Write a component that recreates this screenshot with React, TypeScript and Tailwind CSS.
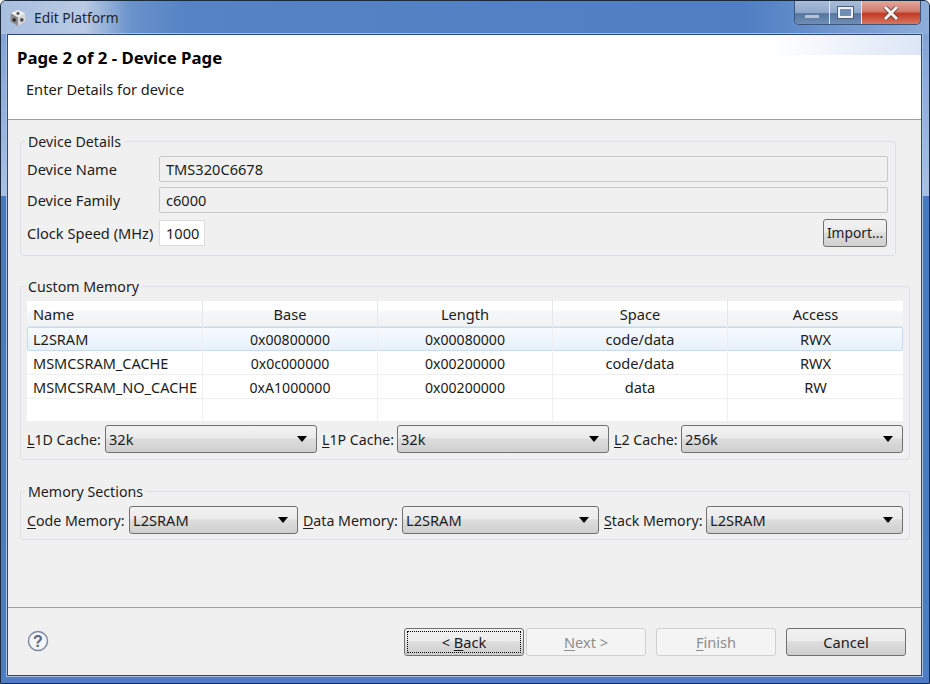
import type { ReactNode } from 'react'

const rows = [
  ['L2SRAM', '0x00800000', '0x00080000', 'code/data', 'RWX'],
  ['MSMCSRAM_CACHE', '0x0c000000', '0x00200000', 'code/data', 'RWX'],
  ['MSMCSRAM_NO_CACHE', '0xA1000000', '0x00200000', 'data', 'RW'],
]

function Group({ title, className, children }: { title: string; className: string; children: ReactNode }) {
  return (
    <fieldset className={`rounded-[3px] border border-[#dcdfe3] ${className}`}>
      <legend className="-ml-[2px] h-[20px] px-[3px] text-[14.2px] leading-[22px]">{title}</legend>
      {children}
    </fieldset>
  )
}

function Select({ value, className }: { value: string; className: string }) {
  return (
    <div className={`flex h-[28px] items-center justify-between rounded-[3px] border border-[#707070] bg-[linear-gradient(#f2f2f2_0%,#ebebeb_45%,#dddddd_50%,#cfcfcf_100%)] pl-[3px] pr-[9px] ${className}`}>
      <span>{value}</span>
      <span className="h-0 w-0 border-x-[5px] border-t-[6px] border-x-transparent border-t-black" />
    </div>
  )
}

function Label({ mark, rest, className = '' }: { mark: string; rest: string; className?: string }) {
  return (
    <span className={`whitespace-nowrap pt-[2px] text-[14.2px] ${className}`}>
      <u className="underline-offset-2">{mark}</u>
      {rest}
    </span>
  )
}

function Button({ children, disabled, focused }: { children: ReactNode; disabled?: boolean; focused?: boolean }) {
  if (disabled) {
    return (
      <div className="flex h-[28px] w-[120px] items-center justify-center rounded-[3px] border border-[#d0d0d0] bg-[#f4f4f4] text-[#8d8d8d]">
        {children}
      </div>
    )
  }
  return (
    <div className="flex h-[28px] w-[120px] items-center justify-center rounded-[3px] border border-[#707070] bg-[linear-gradient(#f2f2f2_0%,#ebebeb_45%,#dddddd_50%,#cfcfcf_100%)] p-[2px]">
      <div className={`flex h-full w-full items-center justify-center ${focused ? 'border border-dotted border-black' : ''}`}>
        {children}
      </div>
    </div>
  )
}

function CubeIcon() {
  return (
    <svg width="18" height="18" viewBox="1 0.5 18 19" className="shrink-0">
      <path d="M10 1.5 17.5 5 18 13.5 10 18.5 2 13.5 2.5 5Z" fill="#b5b5b5" strokeLinejoin="round" />
      <path d="M10 1.5 17.5 5 10 9.5 2.5 5Z" fill="#f0f0f0" />
      <path d="M2.5 5 10 9.5 10 18.5 2 13.5Z" fill="#8a8a8a" />
      <path d="M10 9.5 17.5 5 18 13.5 10 18.5Z" fill="#d8d8d8" />
      <circle cx="10" cy="5.2" r="1.7" fill="#5c5c5c" />
      <circle cx="6" cy="12" r="1.9" fill="#2e2e2e" />
      <circle cx="14" cy="12" r="1.9" fill="#4a4a4a" />
    </svg>
  )
}

function HelpIcon() {
  return (
    <svg width="22" height="22" viewBox="0 0 22 22">
      <circle cx="11" cy="11" r="9.5" fill="#f4f5f8" stroke="#7f8ba3" strokeWidth="1.5" />
      <text x="11" y="16.5" textAnchor="middle" fontSize="16" fontWeight="700" fill="#5a6580" fontFamily="Liberation Sans, sans-serif">?</text>
    </svg>
  )
}

export default function App() {
  return (
    <div className="flex h-[684px] w-[930px] flex-col overflow-hidden rounded-t-[6px] border border-[#1b2a3c] bg-[linear-gradient(#7a9ed3_0px,#a9c0e2_195px,#4a78c0_195px,#4f7dc3_684px)] font-['Noto_Sans',sans-serif] text-[14.6px] leading-[20px] text-[#1c1c1c]">
      {/* title bar */}
      <div className="flex h-[33px] shrink-0 items-start justify-between bg-[linear-gradient(90deg,#a9bfdf_0%,#b9cbe4_9%,#6a92cb_14%,#5583c5_20%,#4f7ec3_80%,#8eadd9_100%)]">
        <div className="flex items-center gap-[7px] pl-[8px] pt-[7px]">
          <CubeIcon />
          <span className="text-[13.8px] text-[#20262e]">Edit Platform</span>
        </div>
        <div className="mr-[8px] flex h-[24px] overflow-hidden rounded-b-[5px] border border-t-0 border-[#3d5577]">
          <div className="flex w-[35px] items-end justify-center border-r border-[#dfe7f2] bg-[linear-gradient(#a9bdd8_0%,#8fa8ca_50%,#56779f_55%,#6f8db5_100%)] pb-[6px]">
            <span className="h-[3px] w-[14px] bg-[#b4c4da]" />
          </div>
          <div className="flex w-[32px] items-center justify-center border-r border-[#dfe7f2] bg-[linear-gradient(#a9bdd8_0%,#8fa8ca_50%,#56779f_55%,#6f8db5_100%)]">
            <span className="h-[11px] w-[15px] border-2 border-[#f0f0f0] bg-[#6f8db5] outline outline-[#4a5f7f]" />
          </div>
          <div className="flex w-[58px] items-center justify-center bg-[linear-gradient(#dfa79c_0%,#d37d6c_45%,#c23a24_55%,#d8765f_100%)]">
            <svg width="16" height="14" viewBox="0 0 16 14">
              <path d="M2 1 14 13M14 1 2 13" stroke="#4c3a38" strokeWidth="4.4" />
              <path d="M2 1 14 13M14 1 2 13" stroke="#f6f2f0" strokeWidth="3" />
            </svg>
          </div>
        </div>
      </div>

      {/* client area */}
      <div className="ml-[6px] mr-[7px] flex h-[642px] flex-col border border-[#2d4a73] bg-[#f0f0f0] outline outline-[#a8c0e4]">
        <div className="relative h-[85px] shrink-0 border-b border-[#a0a0a0] bg-white pl-[9px] pt-[12px]">
          <div className="absolute right-0 top-0 h-[20px] w-[150px] bg-[linear-gradient(90deg,#ffffff,#dce6f6)]" />
          <h1 className="text-[16.8px] font-bold leading-[22px] text-black">Page 2 of 2 - Device Page</h1>
          <p className="ml-[9px] mt-[10px]">Enter Details for device</p>
        </div>

        <div className="flex-1 pl-[12px] pr-[11px]">
          <Group title="Device Details" className="mr-[14px] mt-[11px] h-[125px] pl-[6px] pr-[7px]">
            <div className="mt-[5px] flex h-[26px] items-center">
              <span className="w-[132px]">Device Name</span>
              <div className="flex h-[26px] flex-1 items-center rounded-[2px] border border-[#c8c8c8] bg-[#f0f0f0] pl-[6px]">TMS320C6678</div>
            </div>
            <div className="mt-[5px] flex h-[26px] items-center">
              <span className="w-[132px]">Device Family</span>
              <div className="flex h-[26px] flex-1 items-center rounded-[2px] border border-[#c8c8c8] bg-[#f0f0f0] pl-[6px]">c6000</div>
            </div>
            <div className="mt-[7px] flex h-[26px] items-center justify-between">
              <div className="flex items-center">
                <span className="w-[132px] whitespace-nowrap">Clock Speed (MHz)</span>
                <div className="flex h-[26px] w-[46px] items-center border border-[#dcdcdc] bg-white pl-[6px]">1000</div>
              </div>
              <div className="mr-[1px] flex h-[28px] w-[64px] items-center justify-center rounded-[3px] border border-[#707070] bg-[linear-gradient(#f2f2f2_0%,#ebebeb_45%,#dddddd_50%,#cfcfcf_100%)] text-[13.8px]">Import...</div>
            </div>
          </Group>

          <Group title="Custom Memory" className="mt-[20px] h-[184px] px-[6px]">
            <div className="mt-[5px] bg-white">
              <div className="grid h-[26px] grid-cols-[176px_175px_175px_175px_175px] border-b border-[#dfe6ee] bg-[linear-gradient(#ffffff_0%,#ffffff_35%,#f4f6f8_45%,#f1f3f5_100%)]">
                {['Name', 'Base', 'Length', 'Space', 'Access'].map((h, i) => (
                  <div key={h} className={`flex items-center border-r border-[#e4e6e9] last:border-r-0 ${i === 0 ? 'pl-[6px]' : 'justify-center'}`}>{h}</div>
                ))}
              </div>
              {rows.map((row, r) => (
                <div
                  key={r}
                  className={`grid h-[24px] grid-cols-[176px_175px_175px_175px_175px] ${r === 0 ? 'rounded-[2px] bg-[linear-gradient(#f7fbff,#e6f0fa)] shadow-[inset_0_0_0_1px_#c5dcf0]' : 'border-b border-[#eef0f3]'}`}
                >
                  {row.map((c, i) => (
                    <div key={i} className={`flex items-center border-r border-[#eef0f3] whitespace-nowrap last:border-r-0 ${i === 0 ? 'pl-[6px] text-[14.5px]' : i < 3 ? 'justify-center pt-[2px] text-[14.1px]' : 'justify-center'}`}>{c}</div>
                  ))}
                </div>
              ))}
              <div className="grid h-[22px] grid-cols-[176px_175px_175px_175px_175px]">
                {[0, 1, 2, 3, 4].map((i) => (
                  <div key={i} className="border-r border-[#eef0f3] last:border-r-0" />
                ))}
              </div>
            </div>
            <div className="mt-[4px] flex items-center">
              <Label mark="L" rest="1D Cache:" className="w-[78px]" />
              <Select value="32k" className="w-[212px]" />
              <Label mark="L" rest="1P Cache:" className="ml-[5px] w-[75px]" />
              <Select value="32k" className="w-[212px]" />
              <Label mark="L" rest="2 Cache:" className="ml-[5px] w-[67px]" />
              <Select value="256k" className="w-[222px]" />
            </div>
          </Group>

          <Group title="Memory Sections" className="mt-[21px] h-[59px] px-[6px]">
            <div className="mt-[5px] flex items-center">
              <Label mark="C" rest="ode Memory:" className="w-[102px]" />
              <Select value="L2SRAM" className="w-[169px]" />
              <Label mark="D" rest="ata Memory:" className="ml-[5px] w-[99px]" />
              <Select value="L2SRAM" className="w-[197px]" />
              <Label mark="S" rest="tack Memory:" className="ml-[5px] w-[102px]" />
              <Select value="L2SRAM" className="w-[197px]" />
            </div>
          </Group>
        </div>

        <div className="flex h-[68px] shrink-0 items-start justify-between border-t border-[#a0a0a0] pl-[19px] pr-[15px] pt-[20px]">
          <div className="pt-[2px]">
            <HelpIcon />
          </div>
          <div className="flex">
            <Button focused>
              <span>&lt; <u className="underline-offset-2">B</u>ack</span>
            </Button>
            <div className="ml-[2px]">
              <Button disabled>
                <span><u className="underline-offset-2">N</u>ext &gt;</span>
              </Button>
            </div>
            <div className="ml-[10px]">
              <Button disabled>
                <span><u className="underline-offset-2">F</u>inish</span>
              </Button>
            </div>
            <div className="ml-[10px]">
              <Button>Cancel</Button>
            </div>
          </div>
        </div>
      </div>
    </div>
  )
}
